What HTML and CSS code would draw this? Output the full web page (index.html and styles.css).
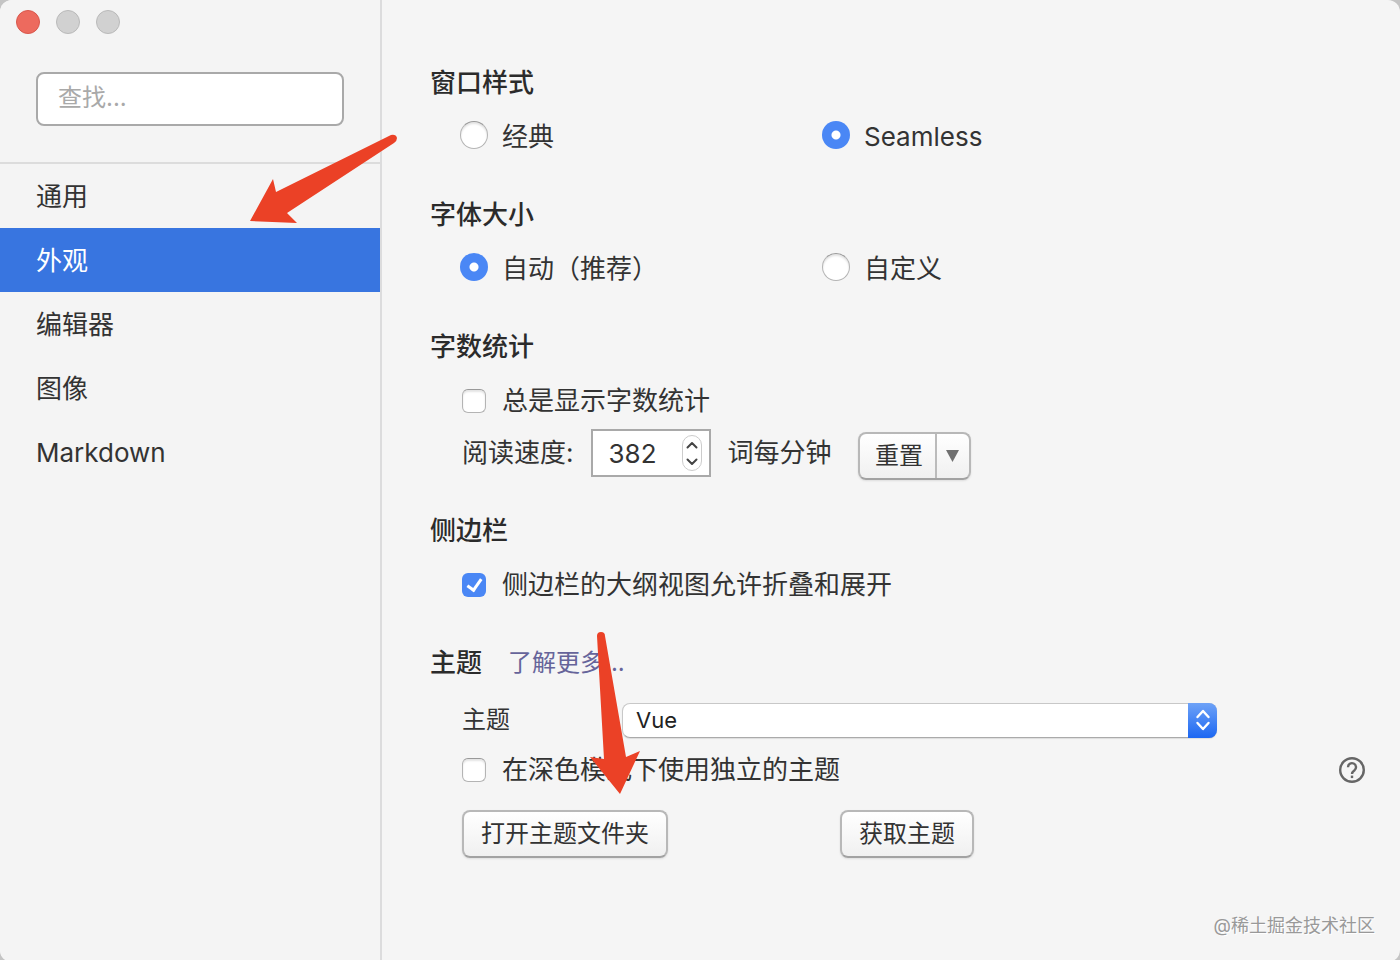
FILE: index.html
```html
<!DOCTYPE html>
<html lang="zh-CN">
<head>
<meta charset="utf-8">
<title>偏好设置</title>
<link rel="stylesheet" href="styles.css">
</head>
<body>
<div class="window">
  <aside class="sidebar">
    <div class="traffic">
      <button class="light light-close" aria-label="关闭"></button>
      <button class="light" aria-label="最小化"></button>
      <button class="light" aria-label="缩放"></button>
    </div>
    <div class="search">
      <input class="search-input" type="search" placeholder="查找..." aria-label="查找">
    </div>
    <nav class="nav">
      <a class="nav-item" href="#general">通用</a>
      <a class="nav-item active" href="#appearance">外观</a>
      <a class="nav-item" href="#editor">编辑器</a>
      <a class="nav-item" href="#image">图像</a>
      <a class="nav-item" href="#markdown">Markdown</a>
    </nav>
  </aside>
  <main class="content">
    <section class="section">
      <h2 class="title">窗口样式</h2>
      <div class="radios">
        <label class="option"><input class="radio" type="radio" name="style"><span>经典</span></label>
        <label class="option"><input class="radio" type="radio" name="style" checked><span>Seamless</span></label>
      </div>
    </section>
    <section class="section">
      <h2 class="title">字体大小</h2>
      <div class="radios">
        <label class="option"><input class="radio" type="radio" name="size" checked><span>自动（推荐）</span></label>
        <label class="option"><input class="radio" type="radio" name="size"><span>自定义</span></label>
      </div>
    </section>
    <section class="section section-count">
      <h2 class="title">字数统计</h2>
      <label class="check-row"><input class="check" type="checkbox"><span>总是显示字数统计</span></label>
      <div class="speed">
        <label for="speed">阅读速度:</label>
        <div class="number">
          <input class="number-input" id="speed" type="number" value="382">
          <div class="stepper">
            <button class="step" aria-label="增加"><svg width="14" height="8" viewBox="0 0 14 8"><path d="M2.500 6.500 7 2l4.500 4.500"/></svg></button>
            <button class="step" aria-label="减少"><svg width="14" height="8" viewBox="0 0 14 8"><path d="M2.500 1.500 7 6l4.500-4.500"/></svg></button>
          </div>
        </div>
        <span>词每分钟</span>
        <div class="split">
          <button class="split-main">重置</button>
          <button class="split-more" aria-label="更多"><svg width="13" height="12" viewBox="0 0 13 12"><path d="M0 0h13L6.500 12z"/></svg></button>
        </div>
      </div>
    </section>
    <section class="section">
      <h2 class="title">侧边栏</h2>
      <label class="check-row"><input class="check" type="checkbox" checked><span>侧边栏的大纲视图允许折叠和展开</span></label>
    </section>
    <section class="section">
      <div class="title-row">
        <h2 class="title">主题</h2>
        <a class="more" href="#themes">了解更多...</a>
      </div>
      <div class="theme">
        <label class="theme-label" for="theme">主题</label>
        <div class="select">
          <select class="select-box" id="theme"><option>Vue</option></select>
          <span class="select-cap"><svg width="16" height="22" viewBox="0 0 16 22"><path d="M2.500 8 8 2l5.500 6M2.500 14 8 20l5.500-6"/></svg></span>
        </div>
      </div>
      <div class="dark">
        <label class="check-row"><input class="check" type="checkbox"><span>在深色模式下使用独立的主题</span></label>
        <button class="help" aria-label="帮助"><svg width="26" height="26" viewBox="0 0 26 26"><circle cx="13" cy="13" r="11.800"/><path d="M9 10.200a4 4 0 1 1 6.600 3c-1.500 1.200-2.600 1.900-2.600 3.800"/><path d="M13 18.600v2.500"/></svg></button>
      </div>
      <div class="actions">
        <button class="button">打开主题文件夹</button>
        <button class="button">获取主题</button>
      </div>
    </section>
  </main>
  <svg class="arrow arrow-nav" width="150" height="92" viewBox="0 0 150 92"><path d="M1 88 24 46l3 13L142 2q5-1 6 3 0 3-3 5L38 80l10 10z"/></svg>
  <svg class="arrow arrow-folder" width="52" height="164" viewBox="0 0 52 164"><path d="M7 5q0-4 4-4t4 4L36 126l14-6-20 43L0 126l14 2z"/></svg>
  <div class="watermark">@稀土掘金技术社区</div>
</div>
</body>
</html>
```
FILE: styles.css
```css
* { box-sizing: border-box; }

body {
  margin: 0;
  background: #c4c4c4;
  color: #333;
  font: 26px/36px Inter, "Noto Sans CJK SC", sans-serif;
}

button, input, select { font: inherit; color: inherit; margin: 0; }
button { padding: 0; }

.window {
  position: relative;
  display: flex;
  min-height: 100vh;
  background: #f5f5f5;
  border-radius: 12px;
  overflow: hidden;
}

/* Sidebar */
.sidebar {
  flex: none;
  width: 382px;
  background: #f4f4f4;
  border-right: 2px solid #dcdcdd;
}
.traffic { display: flex; gap: 16px; padding: 10px 16px 0; }
.light {
  width: 24px;
  height: 24px;
  border: 1px solid #b9b9b9;
  border-radius: 50%;
  background: #d1d1d1;
}
.light-close { background: #ed6a5e; border-color: #d8574c; }
.search { padding: 38px 36px 36px; border-bottom: 2px solid #dcdcdc; }
.search-input {
  display: block;
  width: 100%;
  height: 54px;
  padding: 0 20px 4px;
  border: 2px solid #a9a9a9;
  border-radius: 8px;
  background: #fff;
  font-size: 24px;
  appearance: none;
  outline: none;
}
.search-input::placeholder { color: #a9a9a9; opacity: 1; }
.nav-item {
  display: block;
  padding: 15px 36px 13px;
  color: #333;
  text-decoration: none;
}
.active { background: #3875e0; color: #fff; }

/* Sections */
.content { flex: 1; padding: 67px 35px 60px 48px; }
.section { margin-bottom: 44px; }
.section-count { margin-bottom: 38px; }
.title { margin: 0 0 20px; font-size: 26px; line-height: 32px; font-weight: 500; color: #2b2b2b; }
.title-row { display: flex; gap: 26px; line-height: 32px; }
.more { color: #66649a; font-size: 24px; text-decoration: none; }

.radios { display: grid; grid-template-columns: 362px 1fr; padding-left: 30px; }
.option { display: flex; gap: 14px; }
.check-row { display: flex; align-items: center; gap: 16px; padding-left: 32px; }
.radio, .check {
  flex: none;
  appearance: none;
  border: 1px solid #b4b4b4;
  border-top-color: #999;
  background: #fff;
  box-shadow: inset 0 2px 2px #e4e4e4;
}
.radio { width: 28px; height: 28px; margin-top: 2px; border-radius: 50%; }
.radio:checked {
  border: 0;
  background: radial-gradient(circle, #fff 4px, #4a87f5 5px);
  box-shadow: none;
}
.check { width: 24px; height: 24px; border-radius: 6px; }
.check:checked { position: relative; border: 0; background: #4a87f5; box-shadow: none; }
.check:checked::after {
  content: "";
  position: absolute;
  left: 8px;
  top: 3px;
  width: 6px;
  height: 12px;
  border: solid #fff;
  border-width: 0 3px 3px 0;
  transform: rotate(35deg);
}

/* Reading speed */
.speed { display: flex; align-items: center; height: 48px; margin-top: 10px; padding-left: 32px; gap: 17px; }
.number {
  display: flex;
  align-items: center;
  width: 120px;
  height: 48px;
  padding-right: 7px;
  border: 2px solid #a9a9a9;
  background: #fff;
}
.number-input {
  flex: 1;
  min-width: 0;
  height: 44px;
  padding: 0 0 0 16px;
  border: 0;
  background: none;
  appearance: textfield;
  outline: none;
}
.number-input::-webkit-inner-spin-button { appearance: none; }
.stepper {
  display: flex;
  flex-direction: column;
  width: 20px;
  height: 36px;
  border: 1px solid #ccc;
  border-radius: 10px;
}
.step { display: grid; flex: 1; place-items: center; border: 0; background: none; }
.step svg { fill: none; stroke: #444; stroke-width: 2; stroke-linecap: round; stroke-linejoin: round; }

.split, .button {
  border: 2px solid #b8b8b8;
  border-bottom-color: #a2a2a2;
  border-radius: 8px;
  background: linear-gradient(#fff, #f0f0f0);
  box-shadow: 0 1px 2px #ddd;
  font-size: 24px;
}
.split { display: flex; height: 48px; margin: 6px 0 0 9px; }
.split-main { width: 77px; padding-left: 4px; border: 0; border-right: 2px solid #bbb; background: none; }
.split-more { display: grid; place-items: center; width: 32px; border: 0; background: none; }
.split-more svg { fill: #707070; }

/* Theme */
.theme { display: flex; align-items: center; height: 42px; padding-left: 32px; }
.theme-label { width: 160px; font-size: 24px; }
.select { position: relative; flex: 1; max-width: 595px; }
.select-box {
  display: block;
  width: 100%;
  height: 35px;
  padding: 0 40px 0 13px;
  border: 1px solid #c8c8c8;
  border-bottom-color: #aaa;
  border-radius: 8px;
  background: #fff;
  box-shadow: 0 1px 1px #ddd;
  font-size: 22px;
  line-height: 32px;
  color: #222;
  appearance: none;
}
.select-cap {
  position: absolute;
  top: 0;
  right: 0;
  display: grid;
  place-items: center;
  width: 29px;
  height: 35px;
  border-radius: 0 8px 8px 0;
  background: linear-gradient(#6ea2f7, #1c67f2);
  pointer-events: none;
}
.select-cap svg { fill: none; stroke: #fff; stroke-width: 2.4; stroke-linecap: round; stroke-linejoin: round; }
.dark { display: flex; align-items: center; justify-content: space-between; margin-top: 11px; }
.help { display: block; width: 26px; height: 26px; border: 0; background: none; }
.help svg { display: block; fill: none; stroke: #666; stroke-width: 2.4; }
.actions { display: grid; grid-template-columns: 378px 1fr; justify-items: start; margin-top: 22px; padding-left: 32px; }
.button { height: 48px; padding: 0 17px 1px; }

/* Overlays */
.arrow { position: absolute; fill: #eb4126; pointer-events: none; }
.arrow-nav { left: 249px; top: 133px; }
.arrow-folder { left: 590px; top: 631px; }
.watermark {
  position: absolute;
  right: 25px;
  bottom: 22px;
  font-size: 18px;
  line-height: 28px;
  color: #999;
  text-shadow: 1px 1px 0 #fff;
}
```
